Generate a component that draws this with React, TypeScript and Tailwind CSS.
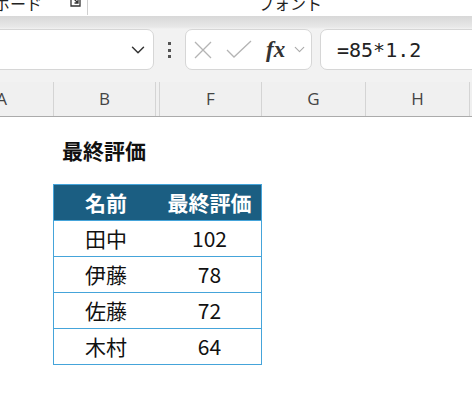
import { ChevronDown } from "lucide-react";

const jp = { fontFamily: '"Noto Sans CJK JP", "Noto Sans", sans-serif' };

const rows = [
  { name: "田中", score: 102 },
  { name: "伊藤", score: 78 },
  { name: "佐藤", score: 72 },
  { name: "木村", score: 64 },
];

function ColHead({ label, className }: { label: string; className: string }) {
  return (
    <div className={`h-full shrink-0 border-r border-[#d4d4d4] flex items-center justify-center ${className}`}>
      {label}
    </div>
  );
}

export default function App() {
  return (
    <div className="w-[472px] h-[397px] overflow-hidden bg-white" style={jp}>
      {/* ribbon strip */}
      <div className="h-[16px] bg-white flex items-end overflow-hidden text-[16px] text-[#222] whitespace-nowrap">
        <span className="ml-[-6px] leading-[16px] mb-[5px]">ボード</span>
        <svg className="ml-[28px] mb-[8px]" width="12" height="10" viewBox="0 0 12 10">
          <path d="M1 0V8H10V0" fill="none" stroke="#333" strokeWidth="1.3" />
          <path d="M3 0L8 5M8 1.5V5H4.5" fill="none" stroke="#333" strokeWidth="1.3" />
        </svg>
        <div className="ml-[5px] w-px h-[15px] bg-[#d0d0d0] mb-[1px]" />
        <span className="ml-[170px] leading-[16px] mb-[5px]">フォント</span>
      </div>

      {/* formula bar */}
      <div className="h-[66px] flex items-start pt-[13px] bg-[linear-gradient(to_bottom,#d8d8d8_0px,#e8e8e8_11px,#f2f2f2_13px,#f2f2f2_100%)]">
        <div className="ml-[-12px] w-[166px] h-[41px] shrink-0 rounded-[7px] border border-[#d6d6d6] bg-white flex items-center justify-end pr-[4px]">
          <ChevronDown className="size-[22px] text-[#333]" strokeWidth={1.6} />
        </div>
        <div className="ml-[14px] mt-[13px] flex flex-col gap-[3.5px]">
          <div className="size-[3px] bg-[#555]" />
          <div className="size-[3px] bg-[#555]" />
          <div className="size-[3px] bg-[#555]" />
        </div>
        <div className="ml-[14px] w-[127px] h-[41px] shrink-0 rounded-[7px] border border-[#d6d6d6] bg-white flex items-center">
          <svg className="ml-[7px]" width="20" height="20" viewBox="0 0 20 20">
            <path d="M2 2L18 18M18 2L2 18" stroke="#b4b4b4" strokeWidth="1.3" />
          </svg>
          <svg className="ml-[13px]" width="26" height="20" viewBox="0 0 26 20">
            <path d="M1 10L8 17L25 1" fill="none" stroke="#b4b4b4" strokeWidth="1.3" />
          </svg>
          <span
            className="ml-[14px] text-[23px] italic font-bold text-[#333] leading-none"
            style={{ fontFamily: '"Liberation Serif", serif' }}
          >
            fx
          </span>
          <ChevronDown className="ml-[6px] size-[17px] text-[#aaa]" strokeWidth={1.6} />
        </div>
        <div className="ml-[8px] w-[170px] h-[41px] shrink-0 rounded-[7px] border border-[#d6d6d6] bg-white flex items-center pl-[16px]">
          <span
            className="text-[20px] text-[#222] leading-none"
            style={{ fontFamily: '"DejaVu Sans Mono", "Liberation Mono", monospace' }}
          >
            =85*1.2
          </span>
        </div>
      </div>

      {/* column headers */}
      <div
        className="h-[35px] bg-[#f0f0f0] border-b border-[#ababab] flex text-[17px] text-[#444]"
        style={{ fontFamily: '"Open Sans", "Noto Sans", sans-serif' }}
      >
        <ColHead label="A" className="ml-[-50px] w-[104px]" />
        <ColHead label="B" className="w-[102px]" />
        <ColHead label="" className="w-[4px]" />
        <ColHead label="F" className="w-[102px]" />
        <ColHead label="G" className="w-[104px]" />
        <ColHead label="H" className="w-[104px]" />
        <ColHead label="" className="w-[104px]" />
      </div>

      {/* sheet */}
      <div className="pt-[19px]">
        <div className="ml-[62px] text-[21px] font-bold leading-[28px] text-[#111]">最終評価</div>
        <div className="ml-[53px] mt-[20px] w-[209px] border border-[#45a4da] text-[21px]">
          <div className="h-[35px] grid grid-cols-[104px_1fr] items-center bg-[#1b5e82] text-white font-bold">
            <div className="text-center">名前</div>
            <div className="text-center">最終評価</div>
          </div>
          {rows.map((r) => (
            <div
              key={r.name}
              className="h-[36px] border-t border-[#45a4da] grid grid-cols-[104px_1fr] items-center text-[#111]"
            >
              <div className="text-center">{r.name}</div>
              <div className="text-center">{r.score}</div>
            </div>
          ))}
        </div>
      </div>
    </div>
  );
}
